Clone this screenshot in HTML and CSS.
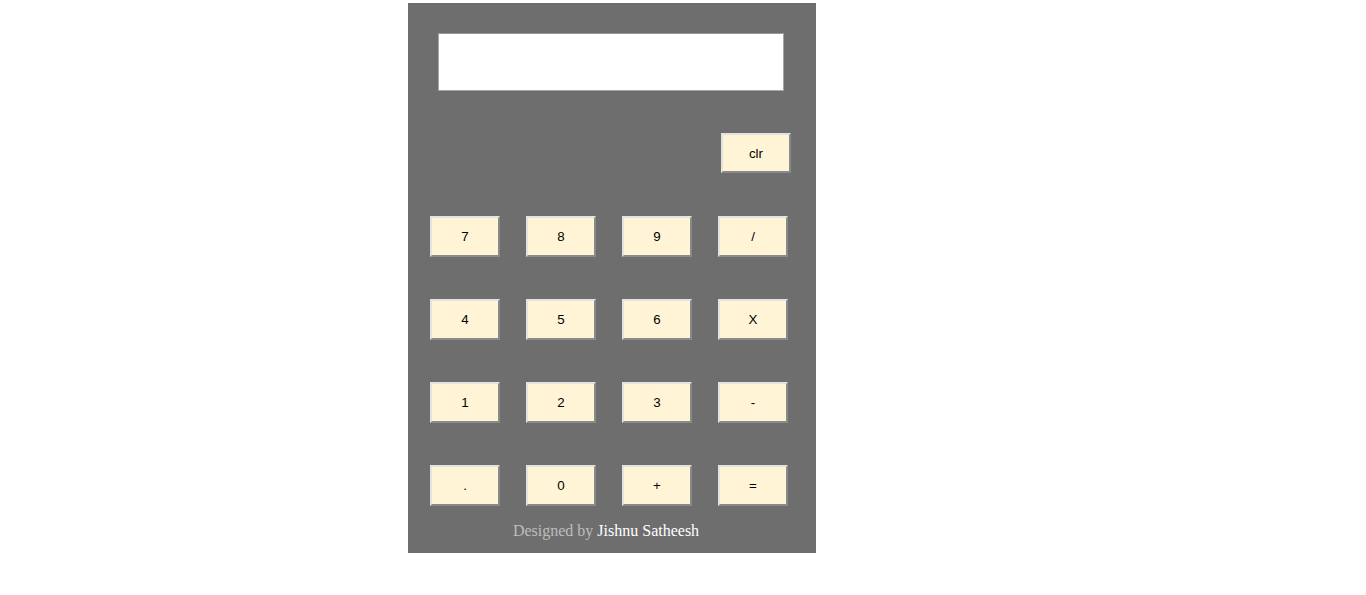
FILE: index.html
```html
<!DOCTYPE html>
<html>
<head>
<meta charset="utf-8">
<link rel="stylesheet" href="styles.css">
</head>
<body>
<div class="calc">
  <input class="display" type="text">
  <div class="clr-row"><button class="btn clr">clr</button></div>
  <div class="keys">
    <button class="btn">7</button><button class="btn">8</button><button class="btn">9</button><button class="btn">/</button>
    <button class="btn">4</button><button class="btn">5</button><button class="btn">6</button><button class="btn">X</button>
    <button class="btn">1</button><button class="btn">2</button><button class="btn">3</button><button class="btn">-</button>
    <button class="btn">.</button><button class="btn">0</button><button class="btn">+</button><button class="btn">=</button>
  </div>
  <p class="credit">Designed by <span class="name">Jishnu Satheesh</span></p>
</div>
</body>
</html>
```
FILE: styles.css
```css
html, body { margin: 0; padding: 0; background: #fff; }
.calc {
  box-sizing: border-box;
  width: 408px;
  height: 550px;
  margin: 3px 0 0 408px;
  background: #6e6e6e;
  padding-top: 30px;
  display: flex;
  flex-direction: column;
}
.display {
  box-sizing: border-box;
  display: block;
  margin: 0 0 0 30px;
  width: 346px;
  height: 58px;
  border: 1px solid #a6a6a6;
  border-top-color: #999;
  background: #fff;
  padding: 0;
  outline: none;
}
.clr-row {
  display: flex;
  justify-content: flex-end;
  padding-right: 25px;
  margin-top: 42px;
}
.btn {
  box-sizing: border-box;
  width: 70px;
  height: 41px;
  margin: 0;
  padding: 0;
  background: #fff5d6;
  border: 2px solid;
  border-color: #e3e3e3 #8a8a8a #8a8a8a #e3e3e3;
  font-family: "Liberation Sans", Arial, sans-serif;
  font-size: 13.33px;
  color: #000;
}
.btn.clr { height: 40px; }
.keys {
  display: grid;
  grid-template-columns: repeat(4, 70px);
  grid-auto-rows: 41px;
  column-gap: 26px;
  row-gap: 42px;
  margin: 43px 0 0 22px;
}
.credit {
  margin: 16px 0 0 0;
  padding-right: 12px;
  text-align: center;
  font-family: "Liberation Serif", "Times New Roman", serif;
  font-size: 16px;
  line-height: 18px;
  color: #bdbdbd;
}
.name { color: #fff; }
```
